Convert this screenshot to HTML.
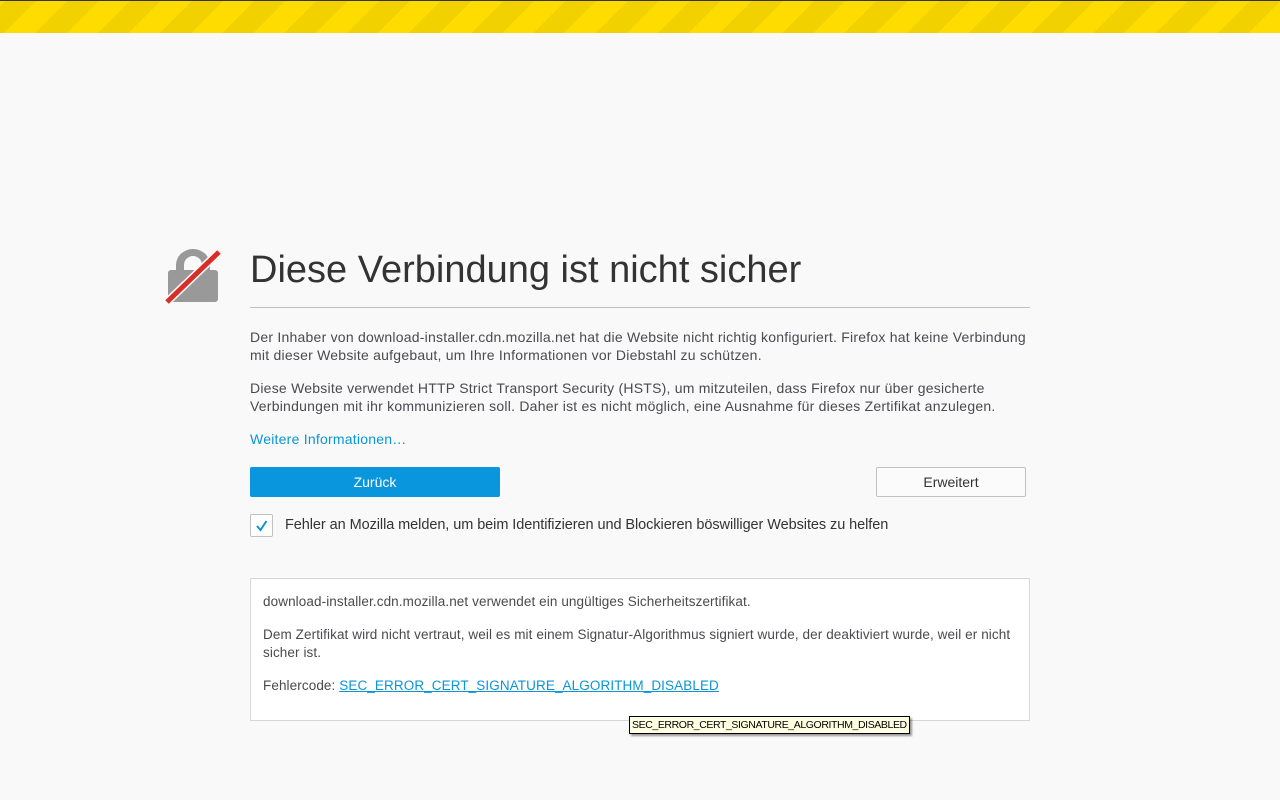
<!DOCTYPE html>
<html><head><meta charset="utf-8"><style>
html,body{margin:0;padding:0;width:1280px;height:800px;background:#f9f9fa;overflow:hidden;font-family:"Liberation Sans",sans-serif;color:#333;}
.stripe{position:absolute;left:0;top:0;width:1280px;height:33px;border-top:1px solid #333;box-sizing:border-box;
background:repeating-linear-gradient(-45deg,#ffdc00 0,#ffdc00 22px,#f2d100 22px,#f2d100 44px);}
.title{position:absolute;left:250px;top:249px;font-size:38px;color:#333;letter-spacing:0px}
.hr{position:absolute;left:250px;top:307px;width:780px;height:1px;background:#c1c1c1}
p{margin:0;position:absolute;left:250px;width:800px;font-size:14px;line-height:18px;color:#4a4a4f;letter-spacing:0.23px}
a{color:#0996d6}
.btn1{position:absolute;left:250px;top:467px;width:250px;height:30px;background:#0996dd;color:#fff;font-size:14px;text-align:center;line-height:30px;border-radius:2px}
.btn2{position:absolute;left:876px;top:467px;width:148px;height:28px;border:1px solid #c1c1c1;background:#fbfbfb;color:#333;font-size:14px;text-align:center;line-height:28px;border-radius:2px}
.cb{position:absolute;left:250px;top:514px;width:23px;height:23px;border:1px solid #c1c1c1;border-radius:2px;background:#fff;box-sizing:border-box}
.box{position:absolute;left:250px;top:578px;width:778px;height:141px;border:1px solid #d7d7db;background:#fff}
.box p{left:12px;width:790px;font-size:13.5px;color:#4a4a4f;letter-spacing:0.1px}
.tip{position:absolute;left:629px;top:716px;border:1px solid #000;background:#ffffe1;font-size:10.5px;padding:1px 2px;color:#000;box-shadow:2px 2px 2px rgba(0,0,0,.4);letter-spacing:-0.4px;line-height:14px}
</style></head><body>
<div class="stripe"></div>
<svg style="position:absolute;left:160px;top:240px" width="70" height="70" viewBox="0 0 70 70">
<path d="M16 31 V25 A17 16 0 0 1 50 25 V31 H42 V25 A9 9 0 0 0 24 25 V31 Z" fill="#999"/>
<rect x="8" y="30" width="50" height="32" rx="3" fill="#999"/>
<line x1="7" y1="62" x2="59" y2="12" stroke="#fff" stroke-width="8"/>
<line x1="7" y1="62" x2="59" y2="12" stroke="#d92d27" stroke-width="5"/>
</svg>
<div class="title">Diese Verbindung ist nicht sicher</div>
<div class="hr"></div>
<p style="top:328px">Der Inhaber von download-installer.cdn.mozilla.net hat die Website nicht richtig konfiguriert. Firefox hat keine Verbindung<br>mit dieser Website aufgebaut, um Ihre Informationen vor Diebstahl zu schützen.</p>
<p style="top:379px">Diese Website verwendet HTTP Strict Transport Security (HSTS), um mitzuteilen, dass Firefox nur über gesicherte<br>Verbindungen mit ihr kommunizieren soll. Daher ist es nicht möglich, eine Ausnahme für dieses Zertifikat anzulegen.</p>
<p style="top:430px;color:#0996d6">Weitere Informationen…</p>
<div class="btn1">Zurück</div>
<div class="btn2">Erweitert</div>
<div class="cb"><svg width="21" height="21" viewBox="0 0 21 21"><path d="M6 11 L9.5 15 L15.5 6" fill="none" stroke="#0996d6" stroke-width="2"/></svg></div>
<p style="left:285px;top:516px;font-size:14.5px;color:#333;letter-spacing:-0.07px">Fehler an Mozilla melden, um beim Identifizieren und Blockieren böswilliger Websites zu helfen</p>
<div class="box">
<p style="top:14px">download-installer.cdn.mozilla.net verwendet ein ungültiges Sicherheitszertifikat.</p>
<p style="top:47px">Dem Zertifikat wird nicht vertraut, weil es mit einem Signatur-Algorithmus signiert wurde, der deaktiviert wurde, weil er nicht<br>sicher ist.</p>
<p style="top:98px">Fehlercode: <a style="text-decoration:underline">SEC_ERROR_CERT_SIGNATURE_ALGORITHM_DISABLED</a></p>
</div>
<div class="tip">SEC_ERROR_CERT_SIGNATURE_ALGORITHM_DISABLED</div>
</body></html>
